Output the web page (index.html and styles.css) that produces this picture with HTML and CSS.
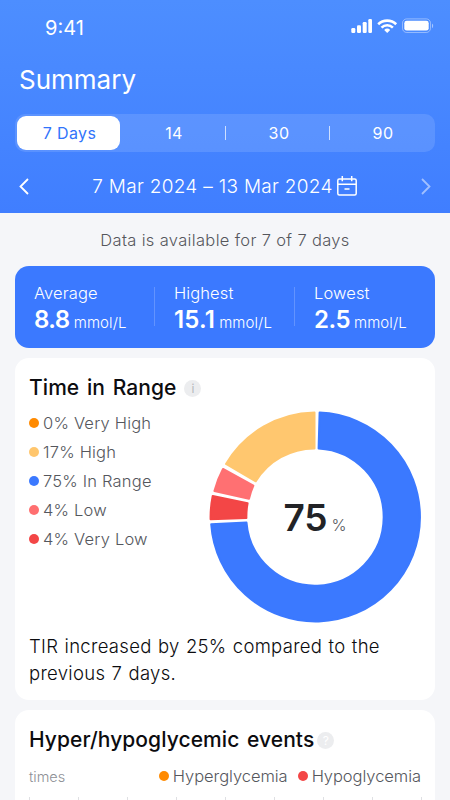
FILE: index.html
```html
<!DOCTYPE html>
<html lang="en">
<head>
  <meta charset="UTF-8" />
  <meta name="viewport" content="width=device-width, initial-scale=1.0"/>
  <title>Summary</title>
  <link rel="stylesheet" href="styles.css">
</head>
<body>
  <div class="screen">
    <header>
      <div class="status-bar">
        <span class="time">9:41</span>
        <svg class="status-icons" width="83" height="16" viewBox="0 0 83 16" fill="none">
          <g fill="#fff">
            <rect x="0.3" y="10" width="4" height="5" rx="1.2"/>
            <rect x="6" y="7.2" width="4" height="7.8" rx="1.2"/>
            <rect x="11.7" y="4" width="4" height="11" rx="1.2"/>
            <rect x="17.3" y="1" width="3.7" height="14" rx="1.2"/>
          </g>
          <g stroke="#fff" stroke-width="2.6">
            <path d="M27.2 6.2a13 13 0 0 1 18 0"/>
            <path d="M30.5 9.6a8.2 8.2 0 0 1 11.4 0"/>
          </g>
          <path d="M33.2 11.9a4.6 4.6 0 0 1 6 0L36.2 15z" fill="#fff"/>
          <rect x="51.5" y="0.9" width="28" height="13.6" rx="4.2" stroke="#fff" stroke-opacity=".4"/>
          <rect x="53.3" y="2.8" width="24.4" height="9.8" rx="2.4" fill="#fff"/>
          <path d="M81 5.6v4.6c1.6-.7 1.6-3.9 0-4.6z" fill="#fff" fill-opacity=".5"/>
        </svg>
      </div>
      <h1>Summary</h1>
      <nav class="tabs">
        <a href="#" class="tab active">7 Days</a>
        <a href="#" class="tab">14</a>
        <a href="#" class="tab divided">30</a>
        <a href="#" class="tab divided">90</a>
      </nav>
      <div class="date-row">
        <svg width="10" height="17" viewBox="0 0 10 17" fill="none" stroke="#fff" stroke-width="1.8">
          <path d="M9 1L1.5 8.5 9 16"/>
        </svg>
        <div class="date">
          <span>7 Mar 2024 – 13 Mar 2024</span>
          <svg width="20" height="20" viewBox="0 0 20 20" fill="none" stroke="#fff" stroke-width="1.5">
            <rect x="0.8" y="3" width="18.4" height="16" rx="1.5"/>
            <path d="M.8 8.2h18.4M5.3 0v5.2M14.7 0v5.2M7.5 13h5"/>
          </svg>
        </div>
        <svg class="next" width="10" height="17" viewBox="0 0 10 17" fill="none" stroke="#fff" stroke-width="1.8">
          <path d="M1 1l7.5 7.5L1 16"/>
        </svg>
      </div>
    </header>

    <main>
      <p class="available">Data is available for 7 of 7 days</p>

      <section class="stats">
        <div class="stat">
          <div class="stat-label">Average</div>
          <div class="stat-value">8.8<span>mmol/L</span></div>
        </div>
        <div class="stat">
          <div class="stat-label">Highest</div>
          <div class="stat-value wide">15.1<span>mmol/L</span></div>
        </div>
        <div class="stat">
          <div class="stat-label">Lowest</div>
          <div class="stat-value">2.5<span>mmol/L</span></div>
        </div>
      </section>

      <section class="card range-card">
        <h2>Time in Range <span class="hint info">i</span></h2>
        <div class="range">
          <ul class="legend">
            <li><i class="dot very-high"></i>0% Very High</li>
            <li><i class="dot high"></i>17% High</li>
            <li><i class="dot in-range"></i>75% In Range</li>
            <li><i class="dot low"></i>4% Low</li>
            <li><i class="dot very-low"></i>4% Very Low</li>
          </ul>
          <div class="donut">
            <svg width="212" height="212" viewBox="0 0 212 212" stroke-width="2" stroke-linejoin="round">
              <path class="seg-in-range" d="M110.6 1.6A104.5 104.5 0 1 1 2.2 113.2L37.5 111.6A68.7 68.7 0 1 0 109.6 37.4Z"/>
              <path class="seg-very-low" d="M1.6 108.3A104.5 104.5 0 0 1 3.7 85L38.6 92.3A68.7 68.7 0 0 0 37.4 106.9Z"/>
              <path class="seg-low" d="M5.4 80A104.5 104.5 0 0 1 14 58L44.4 74.7A68.7 68.7 0 0 0 40 87.8Z"/>
              <path class="seg-high" d="M17 53A104.5 104.5 0 0 1 105.5 1.5L105.5 37.4A68.7 68.7 0 0 0 46.8 70.3Z"/>
            </svg>
            <div class="donut-value">75<span>%</span></div>
          </div>
        </div>
        <p class="note">TIR increased by 25% compared to the previous 7 days.</p>
      </section>

      <section class="card events-card">
        <h2>Hyper/hypoglycemic events <span class="hint">?</span></h2>
        <div class="events-legend">
          <span class="unit">times</span>
          <span class="event"><i class="dot very-high"></i>Hyperglycemia</span>
          <span class="event"><i class="dot very-low"></i>Hypoglycemia</span>
        </div>
        <div class="grid">
          <i></i><i></i><i></i><i></i><i></i><i></i><i></i><i></i><i></i>
        </div>
      </section>
    </main>
  </div>
</body>
</html>
```
FILE: styles.css
```css
body {
  margin: 0;
  font-family: Inter, "Liberation Sans", sans-serif;
  background-color: #f5f6f9;
}

h1, h2, p, ul {
  margin: 0;
  padding: 0;
}

.screen {
  height: 800px;
  overflow: hidden;
}

header {
  height: 213px;
  box-sizing: border-box;
  padding: 18px 15px 0;
  background: linear-gradient(#4d8eff, #407eff);
  color: white;
}

.status-bar {
  display: flex;
  justify-content: space-between;
  align-items: flex-start;
  height: 44px;
  padding: 0 1px 0 30px;
}

.time {
  font-size: 20px;
  line-height: 20px;
}

h1 {
  padding-left: 4px;
  font-size: 26px;
  font-weight: 400;
  line-height: 36px;
}

.tabs {
  display: grid;
  grid-template-columns: repeat(4, 1fr);
  height: 38px;
  margin-top: 16px;
  box-sizing: border-box;
  padding: 2px;
  border-radius: 10px;
  background: rgba(255, 255, 255, 0.12);
}

.tab {
  position: relative;
  display: flex;
  align-items: center;
  justify-content: center;
  padding-left: 2px;
  color: white;
  font-size: 16px;
  letter-spacing: 0.4px;
  text-decoration: none;
}

.tab.active {
  margin-right: 1px;
  border-radius: 9px;
  background: white;
  color: #3174fb;
}

.divided {
  padding-left: 4px;
}

.divided::before {
  content: "";
  position: absolute;
  left: 0;
  width: 1px;
  height: 14px;
  background: rgba(255, 255, 255, 0.7);
}

.date-row {
  display: flex;
  justify-content: space-between;
  align-items: center;
  height: 20px;
  margin-top: 24px;
  padding: 0 4px;
}

.date {
  display: flex;
  align-items: center;
  gap: 4px;
  margin-right: 1px;
  font-size: 19px;
  font-weight: 300;
  letter-spacing: 0.3px;
}

.next {
  opacity: 0.5;
}

main {
  padding: 0 15px;
}

.available {
  height: 53px;
  font-size: 16.5px;
  font-weight: 300;
  line-height: 54px;
  letter-spacing: 0.34px;
  text-align: center;
  color: #55575d;
}

.stats {
  display: grid;
  grid-template-columns: repeat(3, 1fr);
  height: 82px;
  border-radius: 14px;
  background: #3b79ff;
  color: white;
}

.stat {
  position: relative;
  padding: 16px 0 0 19px;
}

.stat + .stat::before {
  content: "";
  position: absolute;
  left: -1px;
  top: 21px;
  width: 1px;
  height: 39px;
  background: rgba(255, 255, 255, 0.2);
}

.stat-label {
  font-size: 16.5px;
  font-weight: 300;
  line-height: 22px;
  letter-spacing: 0.1px;
}

.stat-value {
  font-size: 24px;
  font-weight: 600;
  line-height: 31px;
  letter-spacing: -0.5px;
  white-space: nowrap;
}

.stat-value.wide {
  letter-spacing: 0.2px;
}

.stat-value span {
  margin-left: 4px;
  font-size: 15px;
  font-weight: 300;
  letter-spacing: 0.1px;
}

.card {
  margin-top: 10px;
  padding: 0 14px;
  border-radius: 14px;
  background: white;
}

h2 {
  display: flex;
  align-items: center;
  font-size: 21px;
  font-weight: 500;
  line-height: 28px;
  letter-spacing: 0.07px;
  word-spacing: 2px;
  color: #0c0c0f;
}

.range-card {
  height: 342px;
  box-sizing: border-box;
  padding-top: 16px;
}

.hint {
  width: 17px;
  height: 17px;
  margin-left: 3px;
  border-radius: 50%;
  background: #ecedef;
  color: white;
  font-size: 12px;
  font-weight: 400;
  line-height: 17px;
  letter-spacing: 0;
  text-align: center;
}

.hint.info {
  margin-left: 8px;
  color: #b5b7bb;
}

.range {
  display: flex;
  justify-content: space-between;
  height: 212px;
  margin-top: 9px;
}

.legend {
  list-style: none;
  margin-top: -2px;
}

.legend li {
  display: flex;
  align-items: center;
  height: 28.8px;
  font-size: 16.5px;
  font-weight: 300;
  letter-spacing: 0.2px;
  color: #55575d;
}

.dot {
  width: 10px;
  height: 10px;
  margin-right: 4px;
  border-radius: 50%;
}

.very-high { background: #ff8a00; }
.high { background: #ffc66d; }
.in-range { background: #3b79ff; }
.low { background: #ff6f70; }
.very-low { background: #f34646; }

.donut {
  position: relative;
  width: 212px;
  height: 212px;
}

.seg-in-range { fill: #3b79ff; stroke: #3b79ff; }
.seg-very-low { fill: #f34646; stroke: #f34646; }
.seg-low { fill: #ff7072; stroke: #ff7072; }
.seg-high { fill: #ffc76f; stroke: #ffc76f; }

.donut-value {
  position: absolute;
  inset: 0;
  display: flex;
  justify-content: center;
  align-items: baseline;
  line-height: 214px;
  font-size: 37px;
  font-weight: 600;
  color: #222326;
}

.donut-value span {
  margin-left: 4px;
  font-size: 16px;
  font-weight: 300;
  color: #55575d;
}

.note {
  margin-top: 10px;
  font-size: 18.5px;
  font-weight: 300;
  line-height: 27px;
  letter-spacing: 0.3px;
  word-spacing: 0.8px;
  color: #0c0c0f;
}

.events-card {
  height: 200px;
  padding-top: 16px;
}

.events-legend {
  display: flex;
  align-items: center;
  height: 24px;
  margin-top: 10px;
}

.unit {
  flex: 1;
  font-size: 14.5px;
  font-weight: 300;
  color: #8e9096;
}

.event {
  display: flex;
  align-items: center;
  margin-left: 10px;
  font-size: 16.5px;
  font-weight: 300;
  letter-spacing: -0.05px;
  color: #55575d;
}

.grid {
  display: flex;
  justify-content: space-between;
  height: 100px;
  margin: 9px -1px 0 0;
}

.grid i {
  width: 1px;
  background: #dfe0e3;
}
```
